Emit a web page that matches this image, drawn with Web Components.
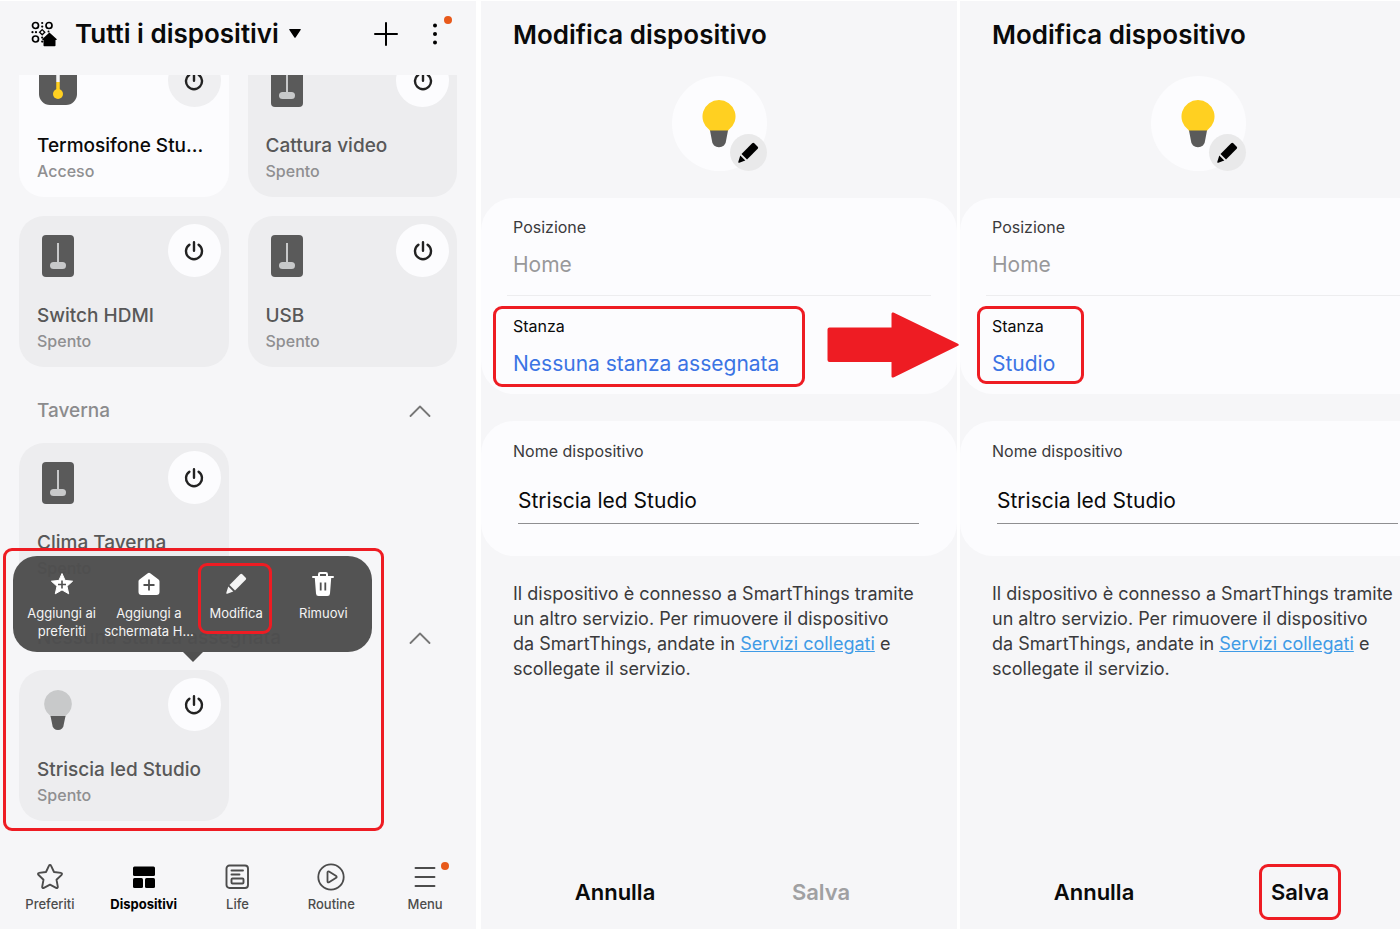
<!DOCTYPE html>
<html lang="it">
<head>
<meta charset="utf-8">
<meta name="viewport" content="width=device-width, initial-scale=1">
<title>Tutti i dispositivi</title>
<style>
    body{
        margin:0;
        background:#fff;
        color:#0a0a0a;
        font-family:Inter, Roboto, sans-serif;
        overflow-x:hidden;
    }
    main{
        display:flex;
        min-height:100vh;
        padding-top:1px;
        box-sizing:border-box;
        overflow:hidden;
    }
    devices-screen, edit-screen{
        flex:0 0 34%;
    }
    .first{
        margin-left:5px;
    }
    .second{
        margin-left:3px;
    }
</style>
</head>
<body>
<main>
    <devices-screen></devices-screen>
    <edit-screen class="first" room="Nessuna stanza assegnata" arrow></edit-screen>
    <edit-screen class="second" room="Studio" dirty></edit-screen>
</main>

<script>
const icons={
    rooms:`<svg width="26" height="26" viewBox="0 0 26 26"><g fill="none" stroke="#000" stroke-width="1.7"><circle cx="4.5" cy="4.5" r="3"/><circle cx="18" cy="4.5" r="3"/><circle cx="4.5" cy="18" r="3"/><path d="M11.2 8.6l2.6 2.6-2.6 2.6-2.6-2.6z" stroke-width="1.3"/></g><g fill="#000"><circle cx="11.2" cy="2" r="1.1"/><circle cx="11.2" cy="5.6" r="1.1"/><circle cx="1.5" cy="11.2" r="1.1"/><circle cx="5" cy="11.2" r="1.1"/><circle cx="17.5" cy="10.6" r="1"/><circle cx="11.2" cy="16.6" r="1.1"/><circle cx="11.2" cy="20.6" r="1.1"/><path d="M18.4 11.600l7.200 6.400c.4.400.2.900-.3.900H24.500v5.600a.8.800 0 0 1-.8.800h-10.400a.8.800 0 0 1-.8-.8v-5.600h-.8c-.5 0-.7-.5-.3-.9z"/></g></svg>`,
    caret:`<svg width="12" height="10" viewBox="0 0 12 10"><path d="M1 0h10c.7 0 1 .6.6 1.100L6.600 8.400c-.3.5-.9.500-1.200 0L.4 1.100C0 .6.300 0 1 0z"/></svg>`,
    plus:`<svg width="24" height="24" viewBox="0 0 24 24" stroke="#000" stroke-width="2" stroke-linecap="round"><path d="M12 1v22M1 12h22"/></svg>`,
    more:`<svg width="6" height="22" viewBox="0 0 6 22"><circle cx="3" cy="2.500" r="2"/><circle cx="3" cy="11" r="2"/><circle cx="3" cy="19.500" r="2"/></svg>`,
    power:`<svg width="20" height="20" viewBox="0 0 20 20" fill="none" stroke="#222" stroke-width="2.400" stroke-linecap="round"><path d="M10 1.300v8.500M5.400 3.700a8 8 0 1 0 9.200 0"/></svg>`,
    heater:`<svg width="40" height="42" viewBox="0 0 40 42"><rect x="1" y="0" width="38" height="40" rx="11" fill="#5a5a5a"/><path d="M20 5v12" stroke="#f5f5f5" stroke-width="3.500"/><path d="M20 17v12" stroke="#ffd021" stroke-width="3.500"/><circle cx="20" cy="29" r="5" fill="#ffd021"/></svg>`,
    relay:`<svg width="40" height="42" viewBox="0 0 40 42"><rect x="4" y="0" width="32" height="42" rx="4" fill="#5a5a5a"/><path d="M20 8v20" stroke="#c8c9ca" stroke-width="2"/><rect x="12" y="27" width="16" height="7" rx="3.500" fill="#c8c9ca"/></svg>`,
    bulb:`<svg width="40" height="42" viewBox="0 0 40 42"><path d="M20 1a14 14 0 0 1 8 25.400l-1 1.600H13l-1-1.600A14 14 0 0 1 20 1z" fill="#c8c9ca"/><path d="M12.500 27h15l-1.800 8.800a5.700 5.200 0 0 1-11.400 0z" fill="#5a5a5a"/></svg>`,
    bulbOn:`<svg width="36" height="48" viewBox="0 0 36 48"><path d="M18 0a16.500 16.500 0 0 1 9.500 30l-.5 1H9l-.5-1A16.500 16.500 0 0 1 18 0z" fill="#ffd021"/><path d="M9 30.500h18l-2 10.600a6.500 5.800 0 0 1-14 0z" fill="#5a5a5a"/></svg>`,
    pencil:`<svg width="22" height="22" viewBox="0 0 22 22" fill="currentColor"><path d="M15.200 1.300a1.500 1.500 0 0 1 2.100 0l3.400 3.400a1.500 1.500 0 0 1 0 2.100L10 17.400 4.500 12z"/><path d="M3.300 13.600l5 5-6 2.100c-.7.2-1.200-.2-1-.9z"/></svg>`,
    starPlus:`<svg width="24" height="24" viewBox="0 0 24 24"><path d="M12 1.500l3.100 6.900 7.500.8-5.600 5 1.700 7.600-6.700-3.900-6.700 3.900L7 14.200l-5.600-5 7.500-.8z" fill="#fff" stroke="#fff" stroke-linejoin="round"/><path d="M12 8.500v8M8 12.500h8" stroke="#505050" stroke-width="1.600"/></svg>`,
    homePlus:`<svg width="24" height="24" viewBox="0 0 24 24"><path d="M10.800 1.200a2 2 0 0 1 2.400 0l8 6c.8.600 1.300 1.300 1.300 2.300v10.500a3 3 0 0 1-3 3h-15a3 3 0 0 1-3-3V9.500c0-1 .5-1.700 1.300-2.300z" fill="#fff"/><path d="M12 7.500v11M6.500 13h11" stroke="#505050" stroke-width="1.800"/></svg>`,
    trash:`<svg width="24" height="26" viewBox="0 0 24 26"><path d="M8 5V3.200C8 2.500 8.500 2 9.200 2h5.600c.7 0 1.200.5 1.200 1.200V5M2 6h20" fill="none" stroke="#fff" stroke-width="2" stroke-linecap="round"/><path d="M3.800 7h16.400l-1.200 15.500a2.600 2.600 0 0 1-2.600 2.500H7.600A2.600 2.600 0 0 1 5 22.500z" fill="#fff"/><path d="M9.700 11.500v8M14.300 11.500v8" stroke="#505050" stroke-width="1.800"/></svg>`,
    chevron:`<svg width="22" height="12" viewBox="0 0 22 12" fill="none" stroke="#777" stroke-width="1.800" stroke-linecap="round" stroke-linejoin="round"><path d="M1.500 11L11 1.500l9.500 9.500"/></svg>`,
    star:`<svg width="28" height="28" viewBox="0 0 28 28" fill="none" stroke="#4c4c4c" stroke-width="1.900" stroke-linejoin="round"><path d="M13 2.700c.4-.9 1.600-.9 2 0l3 6.300 7 .9c1 .1 1.300 1.200.6 1.900l-5.100 4.900 1.300 7c.2 1-.8 1.700-1.700 1.200L14 21.600l-6.100 3.300c-.9.500-1.900-.2-1.700-1.200l1.300-7-5.100-4.900c-.7-.7-.4-1.800.6-1.900l7-.9z"/></svg>`,
    tiles:`<svg width="28" height="28" viewBox="0 0 28 28"><rect x="3" y="3.500" width="22" height="9.500" rx="1.500"/><rect x="3" y="15" width="10" height="10" rx="1.500"/><rect x="15" y="15" width="10" height="10" rx="1.500"/></svg>`,
    life:`<svg width="28" height="28" viewBox="0 0 28 28" fill="none" stroke="#4c4c4c" stroke-width="1.900" stroke-linecap="round"><rect x="3.500" y="2.500" width="21.500" height="22.500" rx="3"/><path d="M8.500 7.500h11.500M8.500 11.500h8"/><rect x="8.500" y="15.500" width="12" height="5" rx="1"/></svg>`,
    play:`<svg width="28" height="28" viewBox="0 0 28 28" fill="none" stroke="#4c4c4c" stroke-width="1.800" stroke-linejoin="round"><circle cx="14" cy="14" r="12.700"/><path d="M10.500 9.300c0-.8.800-1.200 1.500-.8l7.200 4.600c.6.400.6 1.200 0 1.600L12 19.300c-.7.400-1.500 0-1.500-.8z"/></svg>`,
    menu:`<svg width="28" height="28" viewBox="0 0 28 28" stroke="#4c4c4c" stroke-width="1.900" stroke-linecap="round"><path d="M4.500 5h19M4.500 14h19M4.500 23h19"/></svg>`,
    arrow:`<svg width="132" height="66" viewBox="0 0 132 66"><path d="M2.500 15.500H64.500V2c0-1.500 1-2 2.500-1.300L131 31.700c1 .5 1 1.600 0 2.100L67 65.200c-1.500.7-2.500.3-2.500-1.200V50H2.500A2 2 0 0 1 .5 48V17.500a2 2 0 0 1 2-2z" fill="#ee1c23"/></svg>`
}

const base=`
    *{
        box-sizing:border-box;
    }
    svg{
        display:block;
    }
    button{
        font:inherit;
        color:inherit;
        background:none;
        border:0;
        padding:0;
        margin:0;
        cursor:pointer;
    }
    a{
        color:inherit;
        text-decoration:none;
    }
    h1,h2,h3,p{
        margin:0;
        font-weight:inherit;
        font-size:inherit;
    }
    .bar{
        font-size:26px;
        line-height:32px;
        font-weight:600;
    }
`

// red frame laid over whatever element it is placed in
class RedMark extends HTMLElement{
    constructor(){
        super()
        this.attachShadow({mode:'open'})
    }
    connectedCallback(){
        this.shadowRoot.innerHTML=`
        <style>
            :host{
                position:absolute;
                box-sizing:border-box;
                border:3px solid #ee1c23;
                border-radius:9px;
                pointer-events:none;
            }
        </style>`
    }
}

class DeviceCard extends HTMLElement{
    constructor(){
        super()
        this.attachShadow({mode:'open'})
    }
    connectedCallback(){
        const name=this.getAttribute('name')
        this.shadowRoot.innerHTML=`
        <style>${base}
            :host{
                display:block;
                position:relative;
                height:151px;
                box-sizing:border-box;
                padding:8px 8px 0 18px;
                border-radius:25px;
                background:#ededef;
                --disc:#fcfcfe;
                color:#585858;
                min-width:0;
            }
            :host([on]){
                background:#fcfcfe;
                --disc:#efeff1;
                color:#0a0a0a;
            }
            .top{
                display:flex;
                justify-content:space-between;
            }
            .icon{
                padding:11px 1px 0;
            }
            .power{
                display:grid;
                place-items:center;
                width:53px;
                height:53px;
                border-radius:50%;
                background:var(--disc);
            }
            h3{
                margin-top:25px;
                font-size:19px;
                line-height:28px;
                font-weight:500;
                white-space:nowrap;
            }
            p{
                font-size:16px;
                line-height:22px;
                font-weight:500;
                color:#8f8f91;
            }
        </style>
        <div class="top">
            <div class="icon">${icons[this.getAttribute('icon')]}</div>
            <button class="power" aria-label="Accendi o spegni ${name}">${icons.power}</button>
        </div>
        <h3>${name}</h3>
        <p>${this.getAttribute('state')}</p>
        <slot></slot>`
    }
}

class RoomSection extends HTMLElement{
    constructor(){
        super()
        this.attachShadow({mode:'open'})
    }
    connectedCallback(){
        const name=this.getAttribute('name')
        this.shadowRoot.innerHTML=`
        <style>${base}
            :host{
                display:block;
            }
            header{
                display:flex;
                justify-content:space-between;
                align-items:center;
                height:76px;
                padding:12px 26px 0 18px;
                font-size:19px;
                line-height:28px;
                font-weight:500;
                color:#8b8b8d;
            }
            .grid{
                display:grid;
                grid-template-columns:1fr 1fr;
                gap:19px;
            }
        </style>
        ${name ? `<header><h2>${name}</h2><button aria-label="Comprimi ${name}">${icons.chevron}</button></header>` : ''}
        <div class="grid"><slot></slot></div>`
    }
}

class ActionMenu extends HTMLElement{
    constructor(){
        super()
        this.attachShadow({mode:'open'})
    }
    connectedCallback(){
        this.shadowRoot.innerHTML=`
        <style>${base}
            :host{
                position:absolute;
                left:-6px;
                bottom:calc(100% + 18px);
                width:359px;
                height:96px;
                box-sizing:border-box;
                padding:14px 5px 0;
                display:grid;
                grid-template-columns:repeat(4, minmax(0, 1fr));
                align-items:start;
                border-radius:24px;
                background:rgba(76,76,76,.96);
                color:#f4f4f4;
                font-size:13px;
                line-height:18px;
            }
            :host::after{
                content:"";
                position:absolute;
                top:100%;
                left:170px;
                border:10px solid transparent;
                border-top-color:#505050;
                border-bottom:0;
            }
            button{
                position:relative;
                display:flex;
                flex-direction:column;
                align-items:center;
                gap:6px;
                white-space:nowrap;
            }
            .pic{
                display:grid;
                place-items:center;
                height:28px;
            }
            red-mark{
                inset:-7px 8px -12px 5px;
            }
        </style>
        <button><span class="pic">${icons.starPlus}</span><span>Aggiungi ai<br>preferiti</span></button>
        <button><span class="pic">${icons.homePlus}</span><span>Aggiungi a<br>schermata H...</span></button>
        <button><span class="pic">${icons.pencil}</span><span>Modifica</span><red-mark></red-mark></button>
        <button><span class="pic">${icons.trash}</span><span>Rimuovi</span></button>`
    }
}

class TabBar extends HTMLElement{
    constructor(){
        super()
        this.attachShadow({mode:'open'})
    }
    connectedCallback(){
        const tabs=[['star','Preferiti'],['tiles','Dispositivi'],['life','Life'],['play','Routine'],['menu','Menu']]
        this.shadowRoot.innerHTML=`
        <style>${base}
            nav{
                display:grid;
                grid-template-columns:repeat(5, 1fr);
                padding:0 4px 16px 3px;
                font-size:13px;
                line-height:18px;
                font-weight:500;
                color:#4c4c4c;
            }
            a{
                display:flex;
                flex-direction:column;
                align-items:center;
                gap:4px;
            }
            .current{
                color:#000;
                font-weight:700;
            }
            .pic{
                position:relative;
            }
            .new::after{
                content:"";
                position:absolute;
                top:-1px;
                right:-10px;
                width:8px;
                height:8px;
                border-radius:50%;
                background:#e8591a;
            }
        </style>
        <nav>
            ${tabs.map(([icon,label])=>`<a href="#${label.toLowerCase()}" class="${icon=='tiles' ? 'current' : ''}"><span class="pic ${icon=='menu' ? 'new' : ''}">${icons[icon]}</span>${label}</a>`).join('')}
        </nav>`
    }
}

class DevicesScreen extends HTMLElement{
    constructor(){
        super()
        this.attachShadow({mode:'open'})
    }
    connectedCallback(){
        this.shadowRoot.innerHTML=`
        <style>${base}
            :host{
                display:flex;
                flex-direction:column;
                background:#f6f6f8;
            }
            .bar{
                display:flex;
                align-items:center;
                height:74px;
                padding:0 38px 8px 31px;
            }
            .title{
                display:flex;
                align-items:center;
                gap:10px;
                margin-left:18px;
            }
            .add{
                margin-left:auto;
            }
            .more{
                position:relative;
                margin-left:34px;
            }
            .more::after{
                content:"";
                position:absolute;
                top:-7px;
                left:12px;
                width:8px;
                height:8px;
                border-radius:50%;
                background:#e8591a;
            }
            .list{
                flex:1;
                overflow:hidden;
                padding:0 19px;
            }
            /* list scrolled a little under the title bar */
            .scrolled{
                margin-top:-29px;
            }
            .frame{
                inset:-122px -155px -10px -16px;
            }
        </style>
        <header class="bar">
            <button aria-label="Case">${icons.rooms}</button>
            <h1><button class="title">Tutti i dispositivi ${icons.caret}</button></h1>
            <button class="add" aria-label="Aggiungi">${icons.plus}</button>
            <button class="more" aria-label="Altro">${icons.more}</button>
        </header>
        <div class="list">
            <div class="scrolled">
                <room-section>
                    <device-card on icon="heater" name="Termosifone Stu..." state="Acceso"></device-card>
                    <device-card icon="relay" name="Cattura video" state="Spento"></device-card>
                    <device-card icon="relay" name="Switch HDMI" state="Spento"></device-card>
                    <device-card icon="relay" name="USB" state="Spento"></device-card>
                </room-section>
                <room-section name="Taverna">
                    <device-card icon="relay" name="Clima Taverna" state="Spento"></device-card>
                </room-section>
                <room-section name="Nessuna stanza assegnata">
                    <device-card icon="bulb" name="Striscia led Studio" state="Spento">
                        <action-menu></action-menu>
                        <red-mark class="frame"></red-mark>
                    </device-card>
                </room-section>
            </div>
        </div>
        <tab-bar></tab-bar>`
    }
}

class EditScreen extends HTMLElement{
    constructor(){
        super()
        this.attachShadow({mode:'open'})
    }
    connectedCallback(){
        const dirty=this.hasAttribute('dirty')
        this.shadowRoot.innerHTML=`
        <style>${base}
            :host{
                position:relative;
                display:flex;
                flex-direction:column;
                background:#f6f6f8;
            }
            .bar{
                height:75px;
                padding:18px 32px 0;
            }
            .avatar{
                position:relative;
                align-self:center;
                display:grid;
                place-items:center;
                width:95px;
                height:95px;
                border-radius:50%;
                background:#fcfcfe;
            }
            .edit{
                position:absolute;
                right:0;
                bottom:0;
                display:grid;
                place-items:center;
                width:37px;
                height:37px;
                border-radius:50%;
                background:#e9e9ea;
                color:#000;
            }
            .card{
                margin-top:27px;
                border-radius:33px;
                background:#fcfcfe;
            }
            .row{
                position:relative;
                height:98px;
                padding:18px 32px 0;
            }
            .row + .row{
                padding-top:19px;
            }
            .row + .row::before{
                content:"";
                position:absolute;
                top:-1px;
                left:26px;
                right:26px;
                border-top:1px solid #ededef;
            }
            .pair{
                position:relative;
                display:inline-flex;
                flex-direction:column;
                align-items:flex-start;
                gap:12px;
            }
            .label{
                font-size:16px;
                line-height:22px;
                color:#3a3a3c;
            }
            .strong{
                color:#0a0a0a;
            }
            .value{
                font-size:21px;
                line-height:30px;
                color:#3b74e4;
            }
            .value:disabled{
                color:#98989a;
            }
            .pair red-mark{
                inset:-9px -26px -8px -20px;
            }
            :host([dirty]) .pair red-mark{
                inset:-9px -29px -5px -15px;
            }
            .arrow{
                position:absolute;
                right:-2px;
                top:16px;
                z-index:1;
            }
            .name{
                display:flex;
                flex-direction:column;
                gap:20px;
                padding:19px 38px 32px 32px;
            }
            input{
                margin-left:5px;
                padding:0 0 4px;
                height:42px;
                border:0;
                border-bottom:1px solid #8f8f91;
                background:none;
                font:inherit;
                font-size:21px;
                color:#0a0a0a;
                outline:0;
            }
            p{
                margin-top:25px;
                padding:0 32px;
                font-size:18px;
                line-height:25px;
                color:#3a3a3c;
                white-space:nowrap;
            }
            p a{
                color:#3f9be6;
                text-decoration:underline;
            }
            footer{
                display:grid;
                grid-template-columns:1fr 1fr;
                justify-items:center;
                margin-top:auto;
                padding:0 33px 22px 31px;
                font-size:22px;
                line-height:30px;
                font-weight:600;
            }
            footer button{
                position:relative;
            }
            footer button:disabled{
                color:#a0a0a2;
            }
            footer red-mark{
                inset:-13px -12px;
            }
        </style>
        <h1 class="bar">Modifica dispositivo</h1>
        <div class="avatar">
            ${icons.bulbOn}
            <button class="edit" aria-label="Modifica icona">${icons.pencil}</button>
        </div>
        <section class="card">
            <div class="row">
                <div class="pair">
                    <label class="label" for="place">Posizione</label>
                    <button class="value" id="place" disabled>Home</button>
                </div>
            </div>
            <div class="row">
                <div class="pair">
                    <label class="label strong" for="room">Stanza</label>
                    <button class="value" id="room">${this.getAttribute('room')}</button>
                    <red-mark></red-mark>
                </div>
                ${this.hasAttribute('arrow') ? `<div class="arrow">${icons.arrow}</div>` : ''}
            </div>
        </section>
        <section class="card name">
            <label class="label" for="name">Nome dispositivo</label>
            <input id="name" type="text" value="Striscia led Studio">
        </section>
        <p>Il dispositivo è connesso a SmartThings tramite<br>un altro servizio. Per rimuovere il dispositivo<br>da SmartThings, andate in <a href="#servizi">Servizi collegati</a> e<br>scollegate il servizio.</p>
        <footer>
            <button>Annulla</button>
            <button ${dirty ? '' : 'disabled'}>Salva${dirty ? '<red-mark></red-mark>' : ''}</button>
        </footer>`
    }
}

window.customElements.define('red-mark',RedMark)
window.customElements.define('device-card',DeviceCard)
window.customElements.define('room-section',RoomSection)
window.customElements.define('action-menu',ActionMenu)
window.customElements.define('tab-bar',TabBar)
window.customElements.define('devices-screen',DevicesScreen)
window.customElements.define('edit-screen',EditScreen)
</script>
</body>
</html>
